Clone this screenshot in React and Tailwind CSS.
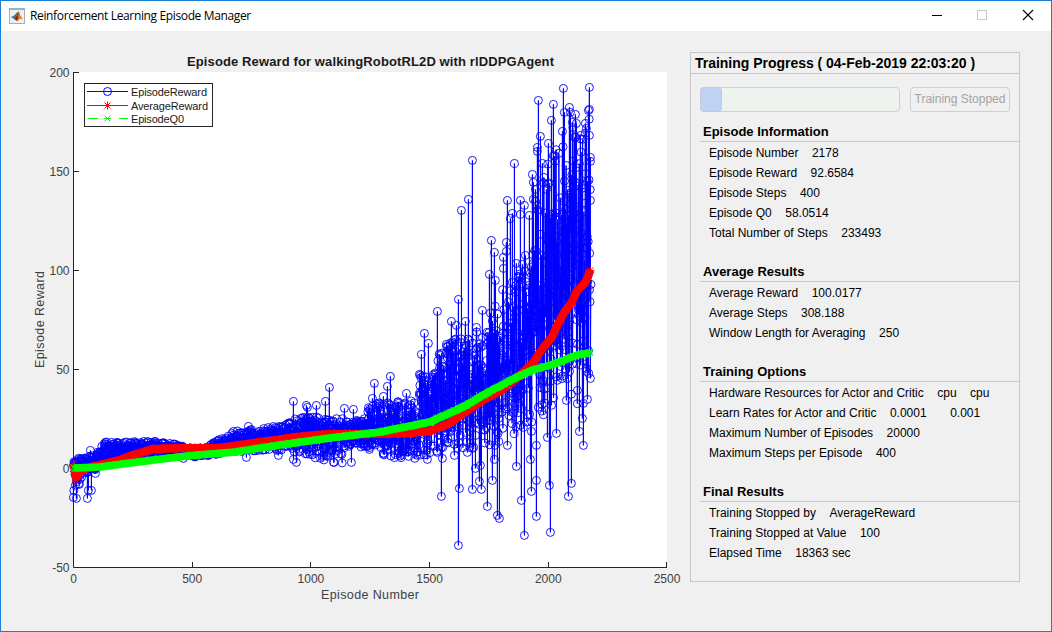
import { useMemo } from "react";

// [x, top, mid, bottom] of the reward cloud along the plot
const ENVELOPE = [
  [74, 461, 469, 492],
  [79, 458, 467, 488],
  [83, 458, 466, 474],
  [95, 455, 464, 470],
  [100, 449, 460, 466],
  [105, 441, 455, 463],
  [155, 441, 449, 454],
  [180, 445, 450, 454],
  [195, 451, 454, 457],
  [205, 448, 451, 456],
  [220, 438, 447, 454],
  [236, 431, 443, 452],
  [285, 425, 438, 450],
  [300, 416, 434, 454],
  [320, 417, 435, 460],
  [342, 418, 435, 464],
  [346, 421, 435, 446],
  [362, 420, 434, 448],
  [370, 404, 430, 450],
  [392, 398, 430, 459],
  [418, 402, 432, 461],
  [420, 374, 415, 459],
  [430, 378, 412, 455],
  [440, 352, 400, 452],
  [460, 334, 390, 449],
  [480, 330, 385, 450],
  [500, 290, 370, 444],
  [530, 260, 350, 425],
  [536, 190, 325, 422],
  [550, 150, 300, 420],
  [565, 125, 275, 418],
  [578, 122, 265, 418],
  [590, 118, 240, 390],
];

const OUTLIERS = [
  [73, 497], [76, 498], [87, 498], [91, 490], [88, 490], [95, 473], [90, 450],
  [183, 458], [233, 431], [248, 426], [246, 457], [278, 455], [293, 401], [293, 459],
  [296, 462], [306, 405], [307, 407], [316, 405], [325, 401], [329, 387], [344, 408],
  [351, 462], [353, 409], [369, 449], [372, 398], [374, 383], [383, 396], [387, 386],
  [390, 376], [398, 403], [406, 393], [419, 374], [421, 354], [424, 333], [427, 459],
  [428, 343], [437, 311], [441, 496], [442, 458], [446, 344], [451, 321], [454, 455],
  [456, 325], [458, 299], [458, 545], [459, 488], [461, 210], [465, 321], [467, 452],
  [468, 199], [472, 160], [472, 489], [475, 468], [476, 327], [479, 481], [480, 465],
  [481, 489], [482, 310], [487, 506], [489, 274], [491, 240], [492, 480], [494, 252],
  [494, 459], [495, 280], [497, 515], [499, 518], [503, 257], [503, 268], [506, 242],
  [506, 251], [507, 200], [507, 445], [510, 218], [512, 213], [514, 163], [516, 466],
  [516, 263], [520, 200], [520, 214], [521, 500], [522, 264], [523, 427], [524, 205],
  [524, 535], [525, 255], [529, 215], [530, 459], [531, 431], [531, 491], [532, 174],
  [533, 263], [533, 182], [533, 199], [535, 189], [536, 445], [536, 480], [536, 516],
  [537, 147], [537, 151], [538, 100], [540, 136], [541, 255], [542, 163], [546, 189],
  [547, 437], [548, 143], [549, 485], [550, 532], [551, 120], [553, 104], [556, 433],
  [562, 131], [563, 88], [564, 112], [566, 400], [568, 496], [569, 107], [570, 112],
  [571, 483], [572, 122], [575, 114], [576, 123], [577, 390], [579, 431], [580, 135],
  [582, 418], [583, 445], [585, 123], [586, 128], [587, 399], [588, 110], [589, 87],
  [589, 109], [589, 135], [590, 157], [590, 200], [590, 161], [590, 378], [590.5, 284],
];

const AVERAGE = [
  [74, 465], [75, 475], [77, 477], [80, 471], [88, 468], [96, 466], [108, 463], [120, 460],
  [133, 455], [153, 449], [187, 448], [220, 448], [240, 445], [297, 437], [330, 434],
  [363, 434], [410, 433], [430, 431], [441, 427], [450, 423], [467, 411], [483, 400],
  [500, 391], [517, 378], [533, 363], [538, 355], [543, 348], [552, 337], [558, 324],
  [565, 311], [572, 302], [577, 291], [585, 283], [590.5, 270],
];

const Q0 = [
  [74, 468], [100, 467], [153, 460], [187, 456], [235, 452], [280, 445], [330, 438],
  [380, 432], [430, 422], [450, 413], [467, 405], [483, 395], [500, 386], [517, 377],
  [533, 370], [557, 363], [577, 355], [590, 353],
];

function rng(seed) {
  let s = seed;
  return () => {
    s = (s * 16807) % 2147483647;
    return s / 2147483647;
  };
}

function lookup(table, x, col) {
  for (let i = 1; i < table.length; i++) {
    const a = table[i - 1];
    const b = table[i];
    if (x <= b[0]) {
      const t = Math.max(0, (x - a[0]) / (b[0] - a[0]));
      return a[col] + (b[col] - a[col]) * t;
    }
  }
  return table[table.length - 1][col];
}

function buildEpisodes() {
  const rand = rng(2178);
  const pts = [];
  for (let i = 0; i < 2030; i++) {
    const x = 73.5 + (i * 517) / 2030;
    const mid = lookup(ENVELOPE, x, 2);
    const up = rand() < 0.55;
    const edge = lookup(ENVELOPE, x, up ? 1 : 3);
    const k = x > 420 ? 1.25 : 1.1;
    pts.push([x, mid + (edge - mid) * Math.pow(rand(), k)]);
  }
  OUTLIERS.forEach(([x, y]) => pts.push([x + 0.4, y + 0.4]));
  return pts.sort((a, b) => a[0] - b[0]);
}

const toLine = (pts) =>
  "M" + pts.map(([x, y]) => `${x.toFixed(1)} ${y.toFixed(1)}`).join("L");

const toCircles = (pts) =>
  pts
    .map(([x, y]) => `M${(x - 4).toFixed(1)} ${y.toFixed(1)}a4 4 0 1 0 8 0a4 4 0 1 0 -8 0`)
    .join("");

// small crosses or asterisks along a smooth series
function toMarks(table, star, seed) {
  const rand = rng(seed);
  let d = "";
  for (let x = 73.5; x <= 590.5; x += 0.8) {
    const y = lookup(table, x, 1) + (rand() - 0.5) * 1.6;
    d += `M${(x - 3).toFixed(1)} ${(y - 3).toFixed(1)}l6 6m0 -6l-6 6`;
    if (star) d += `m-1 -3h8m-4 -4v8`;
  }
  return d;
}

function Chart() {
  const { line, circles } = useMemo(() => {
    const pts = buildEpisodes();
    return { line: toLine(pts), circles: toCircles(pts) };
  }, []);

  return (
    <svg
      className="h-[600px] w-[689px] shrink-0 font-['Liberation_Sans',sans-serif]"
      viewBox="1 31 689 600"
    >
      <rect x="73" y="72" width="594" height="495" fill="#fff" />

      <path
        d="M73.5 72V567.5H667M73 72.5h6M73 171.5h6M73 270.5h6M73 369.5h6M73 468.5h6M192.5 567v-5M310.5 567v-5M429.5 567v-5M548.5 567v-5M666.5 567v-5"
        fill="none"
        stroke="#262626"
      />

      <g fill="none" strokeLinejoin="round">
        <path d={line} stroke="#00f" strokeWidth="1" />
        <path d={circles} stroke="#00f" strokeWidth="0.9" />
        <path d={toLine(AVERAGE)} stroke="#f00" strokeWidth="8" />
        <path d="M70 464l8 8M78 464l-8 8M74 460v16M73 475v8M75 477v9M77 476v8" stroke="#f00" />
        <path d={toMarks(AVERAGE, true, 71)} stroke="#f00" />
        <path d={toLine(Q0)} stroke="#0f0" strokeWidth="7.5" />
        <path d={toMarks(Q0, false, 37)} stroke="#0f0" />
      </g>

      <text x="187" y="66" fontSize="13" fontWeight="bold" fill="#1a1a1a" textLength="367">
        Episode Reward for walkingRobotRL2D with rlDDPGAgent
      </text>

      <g fontSize="12" fill="#404040" textAnchor="end">
        {[200, 150, 100, 50, 0, -50].map((v, i) => (
          <text key={v} x="69.5" y={77 + i * 99}>{v}</text>
        ))}
      </g>
      <g fontSize="12" fill="#404040" textAnchor="middle">
        {[0, 500, 1000, 1500, 2000, 2500].map((v, i) => (
          <text key={v} x={73.5 + i * 118.7} y="583">{v}</text>
        ))}
      </g>

      <text x="321" y="599" fontSize="12.5" fill="#404040" textLength="98">Episode Number</text>
      <text transform="translate(44 368) rotate(-90)" fontSize="12.5" fill="#404040" textLength="97">
        Episode Reward
      </text>

      <rect x="84.5" y="83.5" width="128" height="43" fill="#fff" stroke="#262626" />
      <g fill="none">
        <path d="M87 91.5h41" stroke="#00f" />
        <circle cx="107.5" cy="91.5" r="4" stroke="#00f" />
        <path d="M87 105.5h41M107.5 101.5v8M104.5 102.5l6 6M110.5 102.5l-6 6" stroke="#f00" />
        <path d="M88 118.5h10M104 118.5h7M119 118.5h9M104.5 115.5l6 6M110.5 115.5l-6 6" stroke="#0f0" />
      </g>
      <g fontSize="11" fill="#1a1a1a">
        <text x="131" y="96" textLength="76">EpisodeReward</text>
        <text x="131" y="110" textLength="77">AverageReward</text>
        <text x="131" y="123" textLength="53">EpisodeQ0</text>
      </g>
    </svg>
  );
}

const SECTIONS = [
  {
    title: "Episode Information",
    rows: [
      ["Episode Number", "2178"],
      ["Episode Reward", "92.6584"],
      ["Episode Steps", "400"],
      ["Episode Q0", "58.0514"],
      ["Total Number of Steps", "233493"],
    ],
  },
  {
    title: "Average Results",
    rows: [
      ["Average Reward", "100.0177"],
      ["Average Steps", "308.188"],
      ["Window Length for Averaging", "250"],
    ],
  },
  {
    title: "Training Options",
    rows: [
      ["Hardware Resources for Actor and Critic", "cpu", "cpu"],
      ["Learn Rates for Actor and Critic", "0.0001", "\u00a0\u00a0\u00a00.001"],
      ["Maximum Number of Episodes", "20000"],
      ["Maximum Steps per Episode", "400"],
    ],
  },
  {
    title: "Final Results",
    rows: [
      ["Training Stopped by", "AverageReward"],
      ["Training Stopped at Value", "100"],
      ["Elapsed Time", "18363 sec"],
    ],
  },
];

function ProgressPanel() {
  return (
    <div className="mt-[21px] h-[530px] w-[330px] border border-[#c8c8c8] font-['Liberation_Sans',sans-serif] text-black">
      <div className="h-[21px] border-b border-[#c8c8c8] pl-1 text-[14px] leading-[21px] font-bold tracking-[-0.02px] whitespace-pre">
        Training Progress ( 04-Feb-2019 22:03:20 )
      </div>

      <div className="mt-[13px] flex gap-[10px] pl-[9px]">
        <div className="h-[25px] w-[200px] rounded-[4px] border border-[#cdd2cf] bg-[#eef3f0]">
          <div className="-mt-px -ml-px h-[25px] w-[22px] rounded-[4px] border border-[#c5cad6] bg-[#c0d2f4]" />
        </div>
        <button className="h-[25px] w-[100px] rounded-[4px] border border-[#cfcfcf] text-[12px] leading-[21px] whitespace-nowrap text-[#a3a3a3]">
          Training Stopped
        </button>
      </div>

      <div className="mt-[10px] flex flex-col gap-5 pl-[9px]">
        {SECTIONS.map((s) => (
          <div key={s.title}>
            <h2 className="h-5 border-b border-[#c8c8c8] pl-[3px] text-[13px] leading-[19px] font-bold">
              {s.title}
            </h2>
            {s.rows.map(([label, ...values]) => (
              <div key={label} className="flex h-5 gap-[13.5px] pl-[9px] text-[12px] leading-[22px]">
                <span>{label}</span>
                {values.map((v, i) => (
                  <span key={i}>{v}</span>
                ))}
              </div>
            ))}
          </div>
        ))}
      </div>
    </div>
  );
}

function MatlabIcon() {
  return (
    <svg className="h-4 w-4" viewBox="0 0 16 16">
      <rect x="0.5" y="0.5" width="15" height="15" fill="#eef0f2" stroke="#a9adb2" />
      <rect x="0" y="0" width="16" height="2" fill="#8db4d0" />
      <path d="M2 9l3-1.5L7.5 5 9 3.5 7.5 8 5 11z" fill="#3a78a8" />
      <path d="M5 11l2.5-3L9 3.5 10 4l1 4-3 5-1.5-1z" fill="#7d2a18" />
      <path d="M9.3 3.5L11 7l3 4.5-2.5-1L8 13.5l1-4z" fill="#e8731c" />
    </svg>
  );
}

function TitleBar() {
  return (
    <div className="flex h-[30px] items-center bg-white pl-2">
      <MatlabIcon />
      <span className="ml-[5px] font-['Open_Sans',sans-serif] text-[12px] tracking-[-0.36px] whitespace-nowrap text-black">
        Reinforcement Learning Episode Manager
      </span>
      <svg className="ml-auto h-[30px] w-[120px]" viewBox="931 1 120 30" fill="none">
        <path d="M932 15.5h10" stroke="#000" />
        <rect x="977.5" y="10.5" width="9" height="9" stroke="#c8c8c8" />
        <path d="M1023 10l10 10M1033 10l-10 10" stroke="#000" strokeWidth="1.1" />
      </svg>
    </div>
  );
}

export default function App() {
  return (
    <div className="h-[632px] w-[1052px] overflow-hidden border border-[#1b80d4] bg-[#f0f0f0]">
      <TitleBar />
      <div className="flex">
        <Chart />
        <ProgressPanel />
      </div>
    </div>
  );
}
